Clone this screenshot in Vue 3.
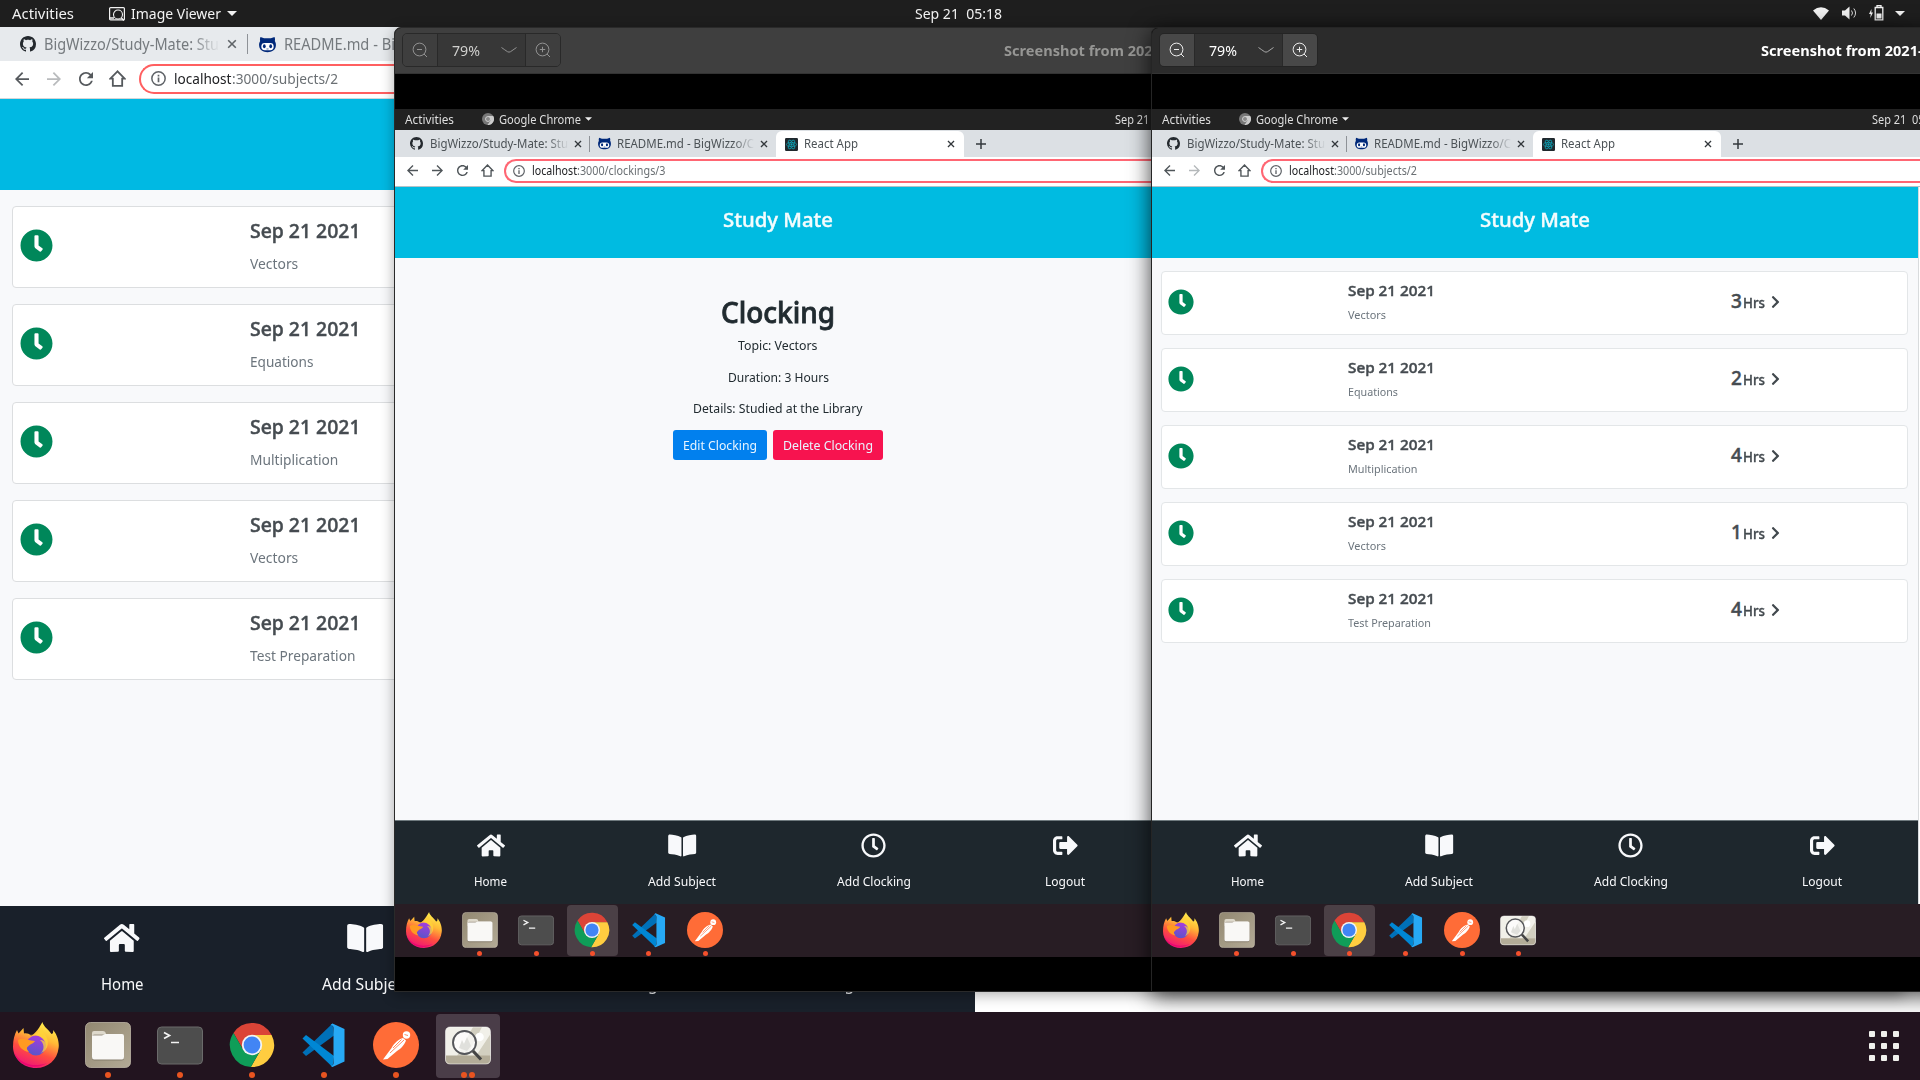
<script setup>
const sessions = ['Vectors', 'Equations', 'Multiplication', 'Vectors', 'Test Preparation']
const widths = { Vectors: 38, Equations: 50, Multiplication: 69.5, 'Test Preparation': 83 }
const hours = [3, 2, 4, 1, 4]
const clockText = 'Sep 21\u00a0 05:18'

const nav = [
  { label: 'Home', icon: 'home', w: 33, iw: 28 },
  { label: 'Add Subject', icon: 'book', w: 68, iw: 28.5 },
  { label: 'Add Clocking', icon: 'clock-o', w: 74, iw: 25 },
  { label: 'Logout', icon: 'logout', w: 40, iw: 25 },
]

const apps = ['firefox', 'files', 'terminal', 'chrome', 'vscode', 'postman', 'viewer']

const viewers = [
  { id: 'a', cls: 'back', path: ':3000/clockings/3', pw: 88.5, forward: true, apps: apps.slice(0, 6), page: 'detail' },
  { id: 'b', cls: 'front', path: ':3000/subjects/2', pw: 83, forward: false, apps, page: 'list' },
]

// Condenses or widens a run of text horizontally to the given width.
const vFit = {
  mounted(el, { value }) {
    const natural = el.getBoundingClientRect().width
    if (!natural) return
    el.style.transform = `scaleX(${value / natural})`
    el.style.marginRight = `${value - natural}px`
  },
}
</script>

<template>
  <div class="desktop">
    <svg class="sprite" width="0" height="0" aria-hidden="true">
      <defs>
        <linearGradient id="gFox" x1="0.75" y1="0" x2="0.35" y2="1">
          <stop offset="0" stop-color="#fff44f" /><stop offset="0.35" stop-color="#ffb936" />
          <stop offset="0.65" stop-color="#ff4f3f" /><stop offset="1" stop-color="#f0127a" />
        </linearGradient>
        <linearGradient id="gGlobe" x1="0.7" y1="0" x2="0.4" y2="1">
          <stop offset="0" stop-color="#a83be0" /><stop offset="1" stop-color="#5b55c8" />
        </linearGradient>
        <linearGradient id="gFiles" x1="0" y1="0" x2="1" y2="1">
          <stop offset="0" stop-color="#928871" /><stop offset="1" stop-color="#b3aa96" />
        </linearGradient>
      </defs>
      <symbol id="home" viewBox="0 0 576 512"><path d="M280.37 148.26L96 300.11V464a16 16 0 0 0 16 16l112.06-.29a16 16 0 0 0 15.92-16V368a16 16 0 0 1 16-16h64a16 16 0 0 1 16 16v95.64a16 16 0 0 0 16 16.05L464 480a16 16 0 0 0 16-16V300L295.67 148.26a12.19 12.19 0 0 0-15.3 0zM571.6 251.47L488 182.56V44.05a12 12 0 0 0-12-12h-56a12 12 0 0 0-12 12v72.61L318.47 43a48 48 0 0 0-61 0L4.34 251.47a12 12 0 0 0-1.6 16.9l25.5 31A12 12 0 0 0 45.15 301l235.22-193.74a12.19 12.19 0 0 1 15.3 0L530.9 301a12 12 0 0 0 16.9-1.6l25.5-31a12 12 0 0 0-1.7-16.93z" /></symbol>
      <symbol id="book" viewBox="0 0 576 512"><path d="M542.22 32.05c-54.8 3.11-163.72 14.43-230.96 55.59-4.64 2.84-7.27 7.89-7.27 13.17v363.87c0 11.55 12.63 18.85 23.28 13.49 69.18-34.82 169.23-44.32 218.7-46.92 16.89-.89 30.02-14.43 30.02-30.66V62.75c.01-17.71-15.35-31.74-33.77-30.7zM264.73 87.64C197.5 46.48 88.58 35.17 33.78 32.05 15.36 31.01 0 45.04 0 62.75V400.6c0 16.24 13.13 29.78 30.02 30.66 49.49 2.6 149.59 12.11 218.77 46.95 10.62 5.35 23.21-1.94 23.21-13.46V100.63c0-5.29-2.62-10.14-7.27-12.99z" /></symbol>
      <symbol id="clock" viewBox="0 0 512 512"><path d="M256,8C119,8,8,119,8,256S119,504,256,504,504,393,504,256,393,8,256,8Zm92.49,313h0l-20,25a16,16,0,0,1-22.49,2.5h0l-67-49.72a40,40,0,0,1-15-31.23V112a16,16,0,0,1,16-16h32a16,16,0,0,1,16,16V256l58,42.5A16,16,0,0,1,348.49,321Z" /></symbol>
      <symbol id="clock-o" viewBox="0 0 512 512"><path d="M256 8C119 8 8 119 8 256s111 248 248 248 248-111 248-248S393 8 256 8zm0 448c-110.5 0-200-89.5-200-200S145.5 56 256 56s200 89.5 200 200-89.5 200-200 200zm61.8-104.4l-84.9-61.7c-3.1-2.3-4.9-5.9-4.9-9.7V116c0-6.6 5.4-12 12-12h32c6.6 0 12 5.4 12 12v141.7l66.8 48.6c5.4 3.9 6.5 11.4 2.6 16.8L334.6 349c-3.9 5.3-11.4 6.5-16.8 2.6z" /></symbol>
      <symbol id="logout" viewBox="0 0 512 512"><path d="M497 273L329 441c-15 15-41 4.5-41-17v-96H152c-13.3 0-24-10.7-24-24v-96c0-13.3 10.7-24 24-24h136V88c0-21.4 25.9-32 41-17l168 168c9.3 9.4 9.3 24.6 0 34zM192 436v-40c0-6.6-5.4-12-12-12H96c-17.7 0-32-14.3-32-32V160c0-17.7 14.3-32 32-32h84c6.6 0 12-5.4 12-12V76c0-6.6-5.4-12-12-12H96c-53 0-96 43-96 96v192c0 53 43 96 96 96h84c6.6 0 12-5.4 12-12z" /></symbol>
      <symbol id="chev" viewBox="0 0 320 512"><path d="M285.476 272.971L91.132 467.314c-9.373 9.373-24.569 9.373-33.941 0l-22.667-22.667c-9.357-9.357-9.375-24.522-.04-33.901L188.505 256 34.484 101.255c-9.335-9.379-9.317-24.544.04-33.901l22.667-22.667c9.373-9.373 24.569-9.373 33.941 0L285.475 239.03c9.373 9.372 9.373 24.568.001 33.941z" /></symbol>
      <symbol id="github" viewBox="0 0 16 16"><path d="M8 0C3.58 0 0 3.58 0 8c0 3.54 2.29 6.53 5.47 7.59.4.07.55-.17.55-.38 0-.19-.01-.82-.01-1.49-2.01.37-2.53-.49-2.69-.94-.09-.23-.48-.94-.82-1.13-.28-.15-.68-.52-.01-.53.63-.01 1.08.58 1.23.82.72 1.21 1.87.87 2.33.66.07-.52.28-.87.51-1.07-1.78-.2-3.64-.89-3.64-3.95 0-.87.31-1.59.82-2.15-.08-.2-.36-1.02.08-2.12 0 0 .67-.21 2.2.82.64-.18 1.32-.27 2-.27.68 0 1.36.09 2 .27 1.53-1.04 2.2-.82 2.2-.82.44 1.1.16 1.92.08 2.12.51.56.82 1.27.82 2.15 0 3.07-1.87 3.75-3.65 3.95.29.25.54.73.54 1.48 0 1.07-.01 1.93-.01 2.2 0 .21.15.46.55.38A8.013 8.013 0 0016 8c0-4.42-3.58-8-8-8z" /></symbol>
      <symbol id="octocat" viewBox="0 0 16 16">
        <path d="M1.4 1 4.8 2.2H11.2L14.6 1C15.3 2.6 15.1 4 14.9 4.6 15.8 6 16 7.5 15.9 9 15.6 13.5 12 15.2 8 15.2S.4 13.5.1 9C0 7.5.2 6 1.1 4.6.9 4 .7 2.6 1.4 1Z" fill="#00297a" />
        <rect x="2.2" y="6.7" width="11.6" height="6.6" rx="3.2" fill="#fff" />
        <ellipse cx="5" cy="9.6" rx="1.3" ry="1.9" fill="#00297a" /><ellipse cx="11" cy="9.6" rx="1.3" ry="1.9" fill="#00297a" />
        <path d="M7 12.2h2" stroke="#00297a" stroke-width=".6" />
      </symbol>
      <symbol id="react" viewBox="0 0 16 16">
        <rect width="16" height="16" rx="1.5" fill="#20282d" />
        <g fill="none" stroke="#0fa5b8" stroke-width=".9"><ellipse cx="8" cy="8" rx="6.2" ry="2.5" /><ellipse cx="8" cy="8" rx="6.2" ry="2.5" transform="rotate(60 8 8)" /><ellipse cx="8" cy="8" rx="6.2" ry="2.5" transform="rotate(120 8 8)" /></g>
        <circle cx="8" cy="8" r="1.4" fill="#0fa5b8" />
      </symbol>
      <symbol id="arrow" viewBox="4 4 16 16"><path d="M20 11H7.83l5.59-5.59L12 4l-8 8 8 8 1.41-1.41L7.83 13H20v-2z" /></symbol>
      <symbol id="reload" viewBox="4 4 16 16"><path d="M17.65 6.35C16.2 4.9 14.21 4 12 4c-4.42 0-7.99 3.58-7.99 8s3.57 8 7.99 8c3.73 0 6.84-2.55 7.73-6h-2.08c-.82 2.33-3.04 4-5.65 4-3.31 0-6-2.69-6-6s2.69-6 6-6c1.66 0 3.14.69 4.22 1.78L13 11h7V4l-2.35 2.35z" /></symbol>
      <symbol id="house" viewBox="0 0 16 16"><path d="M8 1.2 1.2 8.2H3.6V14.9H12.4V8.2H14.8Z" fill="none" stroke="currentColor" stroke-width="1.7" /></symbol>
      <symbol id="info" viewBox="0 0 16 16"><circle cx="8" cy="8" r="7.1" fill="none" stroke="currentColor" stroke-width="1.6" /><path d="M7.1 7h1.8v5H7.1zM7.1 4h1.8v1.8H7.1z" /></symbol>
      <symbol id="close" viewBox="0 0 10 10"><path d="M1.2 1.2l7.6 7.6M8.8 1.2L1.2 8.8" stroke="currentColor" stroke-width="1.6" /></symbol>
      <symbol id="plus" viewBox="0 0 10 10"><path d="M5 0v10M0 5h10" stroke="currentColor" stroke-width="1.5" /></symbol>
      <symbol id="caret" viewBox="0 0 10 5"><path d="M0 0h10L5 5z" /></symbol>
      <symbol id="zout" viewBox="0 0 16 16"><g fill="none" stroke="currentColor" stroke-width="1"><circle cx="7.5" cy="7.5" r="6.4" /><path d="M12 12l3 3M5 7.5h5" /></g></symbol>
      <symbol id="zin" viewBox="0 0 16 16"><g fill="none" stroke="currentColor" stroke-width="1"><circle cx="7.5" cy="7.5" r="6.4" /><path d="M12 12l3 3M4.8 7.5h5.4M7.5 4.8v5.4" /></g></symbol>
      <symbol id="vee" viewBox="0 0 16 6"><path d="M.5.5Q4 3 6.500 4.700 8 5.600 9.500 4.700L15.500.5" fill="none" stroke="currentColor" /></symbol>
      <symbol id="imgv" viewBox="0 0 16 14"><g fill="none" stroke="currentColor"><rect x=".6" y=".6" width="14.8" height="12.3" rx="1" stroke-width="1.2" /><circle cx="9" cy="7.5" r="4.5" stroke-width="1.1" /><path d="M12.3 10.8l2.5 2.7M1 11h4" stroke-width="1.3" /></g></symbol>
      <symbol id="graychrome" viewBox="0 0 12 12"><circle cx="6" cy="6" r="6" fill="#777" /><path d="M6 3h5.2A6 6 0 0 1 5.5 12L8.6 7.5z" fill="#ccc" /><circle cx="6" cy="6" r="2.5" fill="#888" stroke="#ddd" stroke-width=".8" /></symbol>

      <symbol id="firefox" viewBox="0 0 46 46">
        <path d="M29.5 0C30 4 35 7 38.5 12 40 12 40.5 10 40 8 44 12 46.5 20 45.6 26 44.3 38 35 46 23 46 10 46 0 36.5 0 24.5 0 18 1.5 12.5 4 8L5.5 11.5 10.500 6 11 11.500C14 11 16 12 18 13.500 21 13 25 8 29.500 0Z" fill="url(#gFox)" />
        <circle cx="23" cy="23.5" r="10" fill="url(#gGlobe)" />
        <path d="M16 13C22 12 29 14 32 20 30 18 28 18 27 18 31 21 32 27 28 31 36 28 37 18 31 11L29 6C26 9 24 12 19 13Z" fill="#ffd43a" opacity=".75" />
        <path d="M5 18C9 15 14 18 22 19 21 21.500 17 22 15 24.500 13 25.500 14 28 16 30 9 29 5 24 5 18Z" fill="#ff9a22" />
        <path d="M1 30C7 42 20 46 34 41 26 47 6 47 1 30Z" fill="#e8006f" opacity=".75" />
      </symbol>
      <symbol id="files" viewBox="0 0 46 46">
        <rect x=".5" y=".5" width="45" height="45" rx="5" fill="url(#gFiles)" stroke="#c8c1af" stroke-opacity=".7" />
        <path d="M7 11q0-2 2-2h9q2 0 2.500 1.500l.5 1.500h16v6H7z" fill="#ded9cc" />
        <rect x="7" y="12.5" width="32" height="26" rx="2.5" fill="#6f6758" opacity=".6" />
        <path d="M7 13.500h10l3-1.500h17q2 0 2 2v21q0 2.500-2 2.500H9q-2 0-2-2.500z" fill="#f9f8f6" />
      </symbol>
      <symbol id="terminal" viewBox="0 0 46 46">
        <rect x=".5" y="5" width="45" height="37" rx="4" fill="#4d4d4d" stroke="#6b6b6b" />
        <path d="M7 10.500l5.500 3L7 16.500M14 20.500h8" stroke="#f4f4f4" stroke-width="1.700" fill="none" />
      </symbol>
      <symbol id="chrome" viewBox="-23 -23 46 46">
        <path d="M-18.500-12A22 22 0 0 1 19.600-10H0L-8.660 5Z" fill="#db4437" />
        <path d="M19.600-10A22 22 0 0 1-1.140 22L8.660 5 0-10Z" fill="#ffcd40" />
        <path d="M-1.140 22A22 22 0 0 1-18.500-12L-8.660 5H8.660Z" fill="#0f9d58" />
        <circle r="10.2" fill="#f4f4f4" /><circle r="8.4" fill="#4285f4" />
      </symbol>
      <symbol id="vscode" viewBox="0 0 46 46">
        <path d="M1.500 30.500 5 34 33 13.500 31.500 1.500Z" fill="#0070b8" />
        <path d="M1.500 16.500 5 13 33 34 31.500 45Z" fill="#0087d4" />
        <path d="M31.500 1.500 43.500 7V39.500L31.500 45 29.500 43.800Q32.500 44 32.500 41V6Q32.500 3 29.500 3Z" fill="#27a9f5" />
      </symbol>
      <symbol id="postman" viewBox="0 0 46 46">
        <circle cx="23" cy="23" r="23" fill="#ff6c37" />
        <circle cx="33.5" cy="13" r="3.7" fill="#fff" /><path d="M31.500 12.500l3.500 1" stroke="#ff6c37" stroke-width=".8" />
        <path d="M30 16 33 18.500C32 22 28 27 24 29L14.500 37 10 37.500 18.500 26C21 21 26 17 30 16Z" fill="#fff" />
        <path d="M31 18 17 31M28.500 17.500 20 26" stroke="#ff6c37" stroke-width=".8" />
      </symbol>
      <symbol id="viewer" viewBox="0 0 46 46">
        <rect x=".5" y="5" width="45" height="37" rx="4.5" fill="#f1f0e9" />
        <path d="M28 5h9L22 34H12zM45.500 12v22H31z" fill="#d2cfc0" />
        <path d="M.5 33.500h45V38q0 4-4 4H4.500q-4 0-4-4z" fill="#b3ac98" />
        <circle cx="34.5" cy="15" r="4.3" fill="#fff" />
        <rect x=".5" y="5" width="45" height="37" rx="4.5" fill="none" stroke="#fff" stroke-opacity=".5" />
        <circle cx="19.5" cy="20.5" r="11.5" fill="#fff" fill-opacity=".75" stroke="#55565a" stroke-width="1.9" />
        <path d="M14 26l3-8 2 4 3-7 4 9-4 5z" fill="#e0e0dc" />
        <path d="M28 29l8 8.500" stroke="#444" stroke-width="3.2" />
      </symbol>
    </svg>

    <header class="topbar">
      <div class="top-left">
        <span class="t" v-fit="62">Activities</span>
        <svg class="app-ico" width="16" height="14"><use href="#imgv" /></svg>
        <span class="t" v-fit="90">Image Viewer</span>
        <svg class="crt" width="10" height="5"><use href="#caret" /></svg>
      </div>
      <span class="t pre" v-fit="87">{{ clockText }}</span>
      <div class="tray">
        <svg width="16" height="13" viewBox="0 0 16 13"><path d="M0 3.500Q8-3 16 3.500L8 13Z" /></svg>
        <svg width="15" height="14" viewBox="0 0 15 14"><path d="M0 4.500h3L7.500.5v13L3 9.500H0z" /><path d="M9.500 4.500q2 2.500 0 5M11.800 2.500q3.500 4.500 0 9" fill="none" stroke="#ddd" /></svg>
        <svg width="15" height="16" viewBox="0 0 15 16"><path d="M2.500 4 0 9h1.700L1.300 13 4 7.500H2.300z" /><path d="M6.200 2.500h7.600v12.300H6.200zM8 .5h4v2H8z" fill="none" stroke="#f2f2f2" stroke-width="1.300" /><path d="M7.500 8.500h5v5h-5z" /></svg>
        <svg width="10" height="5"><use href="#caret" /></svg>
      </div>
    </header>

    <main class="browser">
      <div class="tabs">
        <svg class="dark" width="16" height="16"><use href="#github" /></svg>
        <div class="fade"><span class="t" v-fit="175">BigWizzo/Study-Mate: Stu</span></div>
        <svg class="x" width="10" height="10"><use href="#close" /></svg>
        <i class="sep" />
        <svg width="17" height="17"><use href="#octocat" /></svg>
        <span class="t" v-fit="111">README.md - Bi</span>
      </div>
      <div class="tools">
        <svg width="14" height="14"><use href="#arrow" /></svg>
        <svg class="flip off" width="14" height="14"><use href="#arrow" /></svg>
        <svg width="14" height="14"><use href="#reload" /></svg>
        <svg width="17" height="17"><use href="#house" /></svg>
        <div class="url">
          <svg width="15" height="15"><use href="#info" /></svg>
          <span class="t host" v-fit="57.5">localhost</span><span class="t" v-fit="106">:3000/subjects/2</span>
        </div>
      </div>
      <div class="page">
        <div class="app">
          <div class="banner" />
          <div class="list">
            <div v-for="(s, i) in sessions" :key="i" class="card">
              <svg class="clk" width="33" height="33"><use href="#clock" /></svg>
              <div class="what">
                <b><span class="t" v-fit="110.5">Sep 21 2021</span></b>
                <small><span class="t" v-fit="widths[s] * 1.27">{{ s }}</span></small>
              </div>
            </div>
          </div>
          <nav class="nav">
            <div v-for="n in nav" :key="n.label">
              <svg :width="n.iw * 1.275" height="32"><use :href="'#' + n.icon" /></svg>
              <span class="t" v-fit="n.w * 1.29">{{ n.label }}</span>
            </div>
          </nav>
        </div>
      </div>
    </main>

    <section v-for="v in viewers" :key="v.id" class="win" :class="v.cls">
      <div class="titlebar">
        <div class="zoom">
          <span><svg width="16" height="16"><use href="#zout" /></svg></span>
          <span class="pct"><em class="t" v-fit="28">79%</em><svg width="16" height="6"><use href="#vee" /></svg></span>
          <span><svg width="16" height="16"><use href="#zin" /></svg></span>
        </div>
        <h1><span class="t" v-fit="170">Screenshot from 2021-0</span></h1>
      </div>
      <div class="shot">
        <div class="s-top">
          <span class="t" v-fit="49">Activities</span>
          <svg width="12" height="12"><use href="#graychrome" /></svg>
          <span class="t" v-fit="82">Google Chrome</span>
          <svg class="crt" width="7" height="4"><use href="#caret" /></svg>
          <span class="t pre" v-fit="68">{{ clockText }}</span>
        </div>
        <div class="s-tabs">
          <svg class="dark gh" width="13" height="13"><use href="#github" /></svg>
          <div class="fade"><span class="t" v-fit="138">BigWizzo/Study-Mate: Stu</span></div>
          <svg class="x" width="8" height="8"><use href="#close" /></svg>
          <i class="sep" />
          <svg width="13" height="13"><use href="#octocat" /></svg>
          <div class="fade second"><span class="t" v-fit="137">README.md - BigWizzo/C</span></div>
          <svg class="x" width="8" height="8"><use href="#close" /></svg>
          <div class="active">
            <svg width="13" height="13"><use href="#react" /></svg>
            <span class="t" v-fit="54">React App</span>
            <svg class="x" width="8" height="8"><use href="#close" /></svg>
          </div>
          <svg class="plus" width="10" height="10"><use href="#plus" /></svg>
        </div>
        <div class="s-tools">
          <svg width="11" height="11"><use href="#arrow" /></svg>
          <svg class="flip" :class="{ off: !v.forward }" width="11" height="11"><use href="#arrow" /></svg>
          <svg width="11" height="11"><use href="#reload" /></svg>
          <svg width="13" height="13"><use href="#house" /></svg>
          <div class="url">
            <svg width="12" height="12"><use href="#info" /></svg>
            <span class="t host" v-fit="45">localhost</span><span class="t" v-fit="v.pw">{{ v.path }}</span>
          </div>
        </div>
        <div class="s-page">
          <div class="app">
            <div class="banner"><span class="t" v-fit="110">Study Mate</span></div>
            <div v-if="v.page === 'detail'" class="detail">
              <h2><span class="t" v-fit="114">Clocking</span></h2>
              <p><span class="t" v-fit="79.5">Topic: Vectors</span></p>
              <p><span class="t" v-fit="101">Duration: 3 Hours</span></p>
              <p><span class="t" v-fit="169.5">Details: Studied at the Library</span></p>
              <div class="btns">
                <button class="edit"><span class="t" v-fit="74">Edit Clocking</span></button>
                <button class="del"><span class="t" v-fit="90">Delete Clocking</span></button>
              </div>
            </div>
            <div v-else class="list">
              <div v-for="(s, i) in sessions" :key="i" class="card">
                <svg class="clk" width="26" height="26"><use href="#clock" /></svg>
                <div class="what">
                  <b><span class="t" v-fit="87">Sep 21 2021</span></b>
                  <small><span class="t" v-fit="widths[s]">{{ s }}</span></small>
                </div>
                <div class="hrs">
                  <strong>{{ hours[i] }}</strong><span class="t" v-fit="22">Hrs</span>
                  <svg width="9" height="14"><use href="#chev" /></svg>
                </div>
              </div>
            </div>
            <nav class="nav">
              <div v-for="n in nav" :key="n.label">
                <svg :width="n.iw" height="25"><use :href="'#' + n.icon" /></svg>
                <span class="t" v-fit="n.w">{{ n.label }}</span>
              </div>
            </nav>
          </div>
          <div class="edge" />
        </div>
        <div class="s-dock">
          <div v-for="a in v.apps" :key="a" class="slot" :class="{ on: a === 'chrome' }">
            <svg width="36" height="36"><use :href="'#' + a" /></svg>
            <i v-if="a !== 'firefox'" class="dot" />
          </div>
        </div>
      </div>
    </section>

    <footer class="dock">
      <div v-for="a in apps" :key="a" class="slot" :class="{ on: a === 'viewer' }">
        <svg width="46" height="46"><use :href="'#' + a" /></svg>
        <div v-if="a !== 'firefox'" class="dots"><i /><i v-if="a === 'viewer'" /></div>
      </div>
      <div class="grid"><i v-for="k in 9" :key="k" /></div>
    </footer>
  </div>
</template>

<style>
body { background: #000; }
</style>

<style scoped>
.desktop { position: relative; width: 1920px; height: 1080px; overflow: hidden; display: flex; flex-direction: column; font-family: "Noto Sans", "Open Sans", sans-serif; background: #fff; }
.desktop *, .desktop { box-sizing: border-box; }
.sprite { position: absolute; }
svg { flex: none; display: block; fill: currentColor; }
.t { display: inline-block; flex: none; white-space: nowrap; transform-origin: 0 50%; font-style: normal; }
.pre { white-space: pre; }

.topbar { height: 27px; flex: none; background: #1e1e1e; color: #f2f2f2; font-size: 14.5px; line-height: 25px; display: flex; align-items: center; justify-content: space-between; padding: 0 15px 1px 12px; }
.top-left { display: flex; align-items: center; width: 905px; }
.app-ico { margin: 1px 6px 0 35px; }
.crt { margin-left: 6px; }
.tray { display: flex; align-items: center; width: 905px; justify-content: flex-end; gap: 12px; }
.tray svg:first-child { margin-right: 1px; }
.tray svg:last-child { margin-left: -1px; }

.browser { flex: none; height: 985px; display: flex; flex-direction: column; background: #fff; }
.tabs { height: 34px; background: #e7eaed; display: flex; align-items: center; padding-left: 20px; color: #757a7e; font-size: 15.5px; line-height: 32px; }
.fade { overflow: hidden; flex: none; width: 176px; margin: 0 7px 0 8px; -webkit-mask-image: linear-gradient(90deg, #000 84%, transparent); mask-image: linear-gradient(90deg, #000 84%, transparent); }
.dark { color: #24292e; }
.x { color: #5f6468; }
.sep { width: 1px; height: 20px; background: #8e9297; margin: 0 11px 0 10px; }
.tabs > .t { margin-left: 8px; }
.tools { height: 38px; flex: none; display: flex; align-items: center; padding: 0 0 2px 15px; gap: 18px; border-bottom: 1px solid #d4d6d8; color: #55595d; }
.tools > svg:nth-child(4) { margin: 0 -5px 0 -2px; }
.flip { transform: scaleX(-1); }
.off { color: #b9bbbd; }
.url { flex: 1; border: 2px solid #ff5f60; border-right: 0; border-radius: 16px 0 0 16px; height: 30px; display: flex; align-items: center; padding-left: 10px; font-size: 15px; line-height: 26px; color: #6b7074; background: #fff; }
.url .t { margin-top: -2px; }
.url svg { margin-right: 8px; color: #5f6368; }
.host { color: #202124; }
.page { flex: 1; display: flex; }
.app { flex: none; display: flex; flex-direction: column; background: #f8f9fb; }
.page > .app { width: 975px; }
.page .banner { height: 91px; background: #00b9e3; }
.list { flex: 1; display: flex; flex-direction: column; }
.page .list { padding: 16px 12px; gap: 16px; }
.card { background: #fff; border: 1px solid #dcdee0; border-radius: 4px; display: flex; align-items: center; }
.page .card { height: 82px; flex: none; padding-left: 8px; }
.clk { color: #00875a; }
.page .clk { margin: -4px 0 0 -1px; }
.what { display: flex; flex-direction: column; }
.page .what { margin-left: 197px; }
b, strong, h2 { font-weight: 500; color: #454b50; -webkit-text-stroke: .45px currentColor; }
small { color: #6c757d; display: block; }
.page b { font-size: 19px; line-height: 28px; margin-top: -2px; }
.page small { font-size: 14.5px; line-height: 24px; margin-top: 6px; }
.nav { display: grid; grid-template-columns: repeat(4, 1fr); color: #f8f9fb; }
.nav > div { display: flex; flex-direction: column; align-items: center; }
.page .nav { height: 106px; background: #19202a; padding-top: 16px; font-size: 15.5px; }
.page .nav .t { margin-top: 14px; line-height: 32px; }

.win { position: absolute; top: 27px; height: 965px; width: 1509px; border: 1px solid #2a2a2a; border-radius: 7px 7px 0 0; background: #000; overflow: hidden; }
.back { left: 394px; box-shadow: 0 3px 14px rgba(0, 0, 0, .32); }
.front { left: 1151px; box-shadow: 0 4px 22px rgba(0, 0, 0, .75); border-color: #252525; }
.titlebar { height: 47px; background: #3f3f3f; border-top: 1px solid #4b4b4b; border-bottom: 1px solid #333; display: flex; align-items: center; padding: 0 0 1px 7px; margin-top: -1px; }
.front .titlebar { background: #2b2b2b; border-top-color: #3d3d3d; }
.zoom { display: flex; height: 34px; width: 159px; border: 1px solid #292929; border-radius: 5px; color: #929292; overflow: hidden; font-size: 14px; }
.zoom > span { width: 34px; display: flex; align-items: center; justify-content: center; background: #3e3e3e; }
.zoom .pct { flex: 1; background: #373737; border: solid #292929; border-width: 0 1px; justify-content: space-between; padding: 0 8px 0 14px; }
.zoom em { color: #cfcfcd; }
.front .zoom { color: #eee; border-color: #242424; }
.front .zoom > span { background: #484848; }
.front .zoom .pct { background: #323232; }
.front .zoom em { color: #fff; }
.front .pct svg { color: #aaa; }
h1 { margin: 0 0 0 443px; font-size: 14.5px; font-weight: 700; color: #969694; line-height: 30px; }
.front h1 { color: #fff; }
.shot { margin-top: 35px; height: 848px; display: flex; flex-direction: column; }
.s-top { height: 21px; flex: none; background: #222; color: #dedede; display: flex; align-items: center; font-size: 11.8px; line-height: 18px; padding: 0 0 1px 9.5px; }
.s-top > svg:nth-child(2) { margin: 0 5px 0 28px; }
.s-top .crt { margin: 0 523.5px 0 4px; fill: #eee; }
.s-tabs { height: 27px; flex: none; background: #dce0e4; display: flex; align-items: center; padding-left: 15px; font-size: 12px; line-height: 24px; color: #4c5256; }
.s-tabs .fade { width: 139px; margin: 0 5px 0 6.5px; }
.s-tabs .second { width: 138px; margin: 0 5px 0 6px; }
.s-tabs .sep { height: 16px; margin: 0 8px 0 7.5px; }
.s-tabs .x { color: #33383c; }
.active { align-self: flex-end; width: 188px; height: 26px; margin-left: 8px; background: #fff; border-radius: 6px 6px 0 0; display: flex; align-items: center; padding: 0 9px; gap: 6px; }
.active .x { margin-left: auto; }
.plus { margin-left: 12px; color: #33383c; }
.s-tools { height: 30px; flex: none; background: #fff; border-bottom: 1px solid #b4c2c8; display: flex; align-items: center; gap: 14px; padding: 0 0 2px 12px; color: #4f5559; }
.s-tools > svg:nth-child(4) { margin: 0 -4px 0 -1px; }
.s-tools .off { color: #b4b8ba; }
.s-tools .url { height: 24px; border-color: #ff6673; border-radius: 12px 0 0 12px; font-size: 11.7px; line-height: 20px; padding-left: 7px; }
.s-tools .url .t { margin-top: -1px; }
.s-tools .url svg { margin-right: 6.5px; }
.s-page { flex: 1; min-height: 0; display: flex; background: #fff; }
.s-page > .app { width: 766px; }
.edge { width: 2px; border-left: 1px solid #d8dbdd; background: #fff; }
.s-page .banner { height: 71px; flex: none; background: #00bbe1; color: #f4fcfd; display: flex; justify-content: center; font-size: 20px; line-height: 66px; font-weight: 500; -webkit-text-stroke: .4px currentColor; }
.detail { flex: 1; display: flex; flex-direction: column; align-items: center; color: #212b30; padding-top: 35px; }
h2 { margin: 0 0 5px; font-size: 29px; line-height: 38px; color: #212b30; -webkit-text-stroke-width: .8px; }
.detail p { margin: 0 0 12.5px; font-size: 12.3px; line-height: 19px; }
.btns { display: flex; gap: 6px; margin-top: -1px; }
button { border: 0; border-radius: 3px; height: 30px; padding: 1px 10.2px 0; color: #e8f4ff; font: 12.3px/30px "Noto Sans", sans-serif; display: flex; }
.edit { background: #0180ee; }
.del { background: #f7134f; }
.s-page .list { padding: 13px 10px 0 9px; gap: 13px; }
.s-page .card { height: 64px; flex: none; padding-left: 6px; border-color: #e3e6e8; }
.s-page .clk { margin-top: -3px; }
.s-page .what { margin-left: 154px; width: 383px; }
.s-page b { font-size: 15px; line-height: 22px; margin-top: -3px; }
.s-page small { font-size: 11.2px; line-height: 18px; margin-top: 5px; }
.hrs { display: flex; align-items: center; color: #42494e; font-size: 14.2px; font-weight: 500; margin-top: -2px; -webkit-text-stroke: .35px currentColor; }
.hrs strong { font-size: 19px; width: 11.5px; line-height: 24px; margin-top: -3px; }
.hrs svg { margin-left: 6px; }
.s-page .nav { height: 84px; flex: none; background: #1e272d; border-top: 1px solid #6f7a7e; padding-top: 12px; font-size: 12.2px; }
.s-page .nav .t { margin-top: 14px; line-height: 20px; }
.s-dock { height: 53px; flex: none; background: #281d24; display: flex; padding-left: .5px; }
.s-dock .slot { width: 50.5px; height: 51px; margin: 1px 2.9px; }
.s-dock .slot svg { margin-top: 7px; }
.slot { position: relative; display: flex; flex-direction: column; align-items: center; border-radius: 4px; }
.slot.on { background: #4b4046; }
.s-dock .dot { width: 5px; height: 5px; border-radius: 50%; background: #f4502c; margin-top: 3px; }

.dock { position: relative; height: 68px; flex: none; background: #22141f; display: flex; }
.dock .slot { width: 64px; height: 64px; margin: 2px 4px 0; }
.dock .slot svg { margin-top: 8px; }
.dock .slot.on { background: #4a3d48; }
.dots { display: flex; gap: 2px; margin-top: 4px; }
.dots i { width: 6px; height: 6px; border-radius: 50%; background: #e95420; }
.grid { margin: 19px 21px 0 auto; display: grid; grid-template-columns: repeat(3, 6px); grid-auto-rows: 6px; gap: 6px; }
.grid i { background: #f0f0ec; border-radius: 1px; }
</style>
